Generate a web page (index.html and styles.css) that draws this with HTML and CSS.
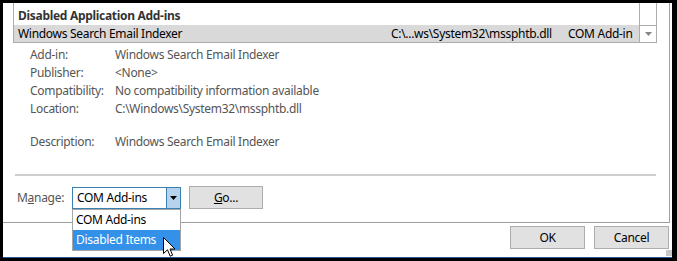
FILE: index.html
```html
<!DOCTYPE html>
<html lang="en">

<head>
    <meta charset="UTF-8">
    <title>COM Add-ins</title>
    <link rel="stylesheet" href="styles.css">
</head>

<body>
    <div class="window">
        <div class="panel">
            <!-- Add-in list -->
            <div class="listbox">
                <div class="list-body">
                    <div class="list-group">Disabled Application Add-ins</div>
                    <div class="list-row selected">
                        <span>Windows Search Email Indexer</span>
                        <span>C:\...ws\System32\mssphtb.dll</span>
                        <span>COM Add-in</span>
                    </div>
                </div>
                <div class="scrollbar">
                    <div class="scroll-track"></div>
                    <div class="scroll-down">
                        <svg width="7" height="4" viewBox="0 0 7 4">
                            <path d="M0 0 H7 L3.5 4 Z" fill="#868686" />
                        </svg>
                    </div>
                </div>
            </div>
            <!-- Details -->
            <div class="details">
                <span class="label">Add-in:</span>
                <span class="value">Windows Search Email Indexer</span>
                <span class="label">Publisher:</span>
                <span class="value">&lt;None&gt;</span>
                <span class="label">Compatibility:</span>
                <span class="value">No compatibility information available</span>
                <span class="label">Location:</span>
                <span class="value">C:\Windows\System32\mssphtb.dll</span>
                <span class="label spaced">Description:</span>
                <span class="value spaced">Windows Search Email Indexer</span>
            </div>
            <div class="separator"></div>
            <!-- Manage -->
            <div class="manage">
                <span class="manage-label">M<u>a</u>nage:</span>
                <div class="combo">
                    <span class="combo-value">COM Add-ins</span>
                    <span class="combo-btn">
                        <svg width="7" height="4" viewBox="0 0 7 4">
                            <path d="M0 0 H7 L3.5 4 Z" fill="#000" />
                        </svg>
                    </span>
                    <ul class="combo-list">
                        <li>COM Add-ins</li>
                        <li class="active">Disabled Items</li>
                    </ul>
                </div>
                <button class="btn go-button"><u>G</u>o...</button>
            </div>
        </div>
        <div class="actions">
            <button class="btn">OK</button>
            <button class="btn">Cancel</button>
        </div>
        <div class="grip"></div>
        <svg class="cursor" width="13" height="21" viewBox="0 0 13 21">
            <path d="M0.5 0.5 V16.5 L4.5 12.8 L7.2 19.2 L9.6 18.2 L7 12 H12 Z" fill="#fff" stroke="#000"
                stroke-width="1" stroke-linejoin="miter" />
        </svg>
    </div>
</body>

</html>
```

FILE: styles.css
```css
body {
    margin: 0;
    padding: 3px 5px 3px 3px;
    background-color: #000;
    font-family: 'Noto Sans', 'Open Sans', sans-serif;
    font-size: 12px;
    letter-spacing: -0.3px;
    color: #000;
}

.window {
    position: relative;
    width: 669px;
    height: 254px;
    background-color: #fff;
    border-bottom: 1px solid #2b5797;
}

.panel {
    width: 666px;
    height: 219px;
    border-right: 1px solid #a0a0a0;
    border-bottom: 1px solid #a0a0a0;
}

/* list */

.listbox {
    display: flex;
    margin-left: 10px;
    width: 642px;
    height: 39px;
    border-left: 1px solid #acacac;
    border-right: 1px solid #acacac;
    border-bottom: 1px solid #acacac;
}

.list-body {
    flex: 1;
}

.list-group {
    height: 22px;
    line-height: 26px;
    padding-left: 4px;
    font-weight: bold;
    color: #333;
}

.list-row {
    display: grid;
    grid-template-columns: 373px 177px 1fr;
    height: 17px;
    line-height: 17px;
    padding-left: 4px;
    white-space: nowrap;
}

.list-row.selected {
    background-color: #d9d9d9;
}

.scrollbar {
    display: flex;
    flex-direction: column;
    width: 16px;
    border-left: 1px solid #acacac;
}

.scroll-track {
    flex: 1;
}

.scroll-down {
    height: 16px;
    border-top: 1px solid #acacac;
    display: flex;
    align-items: center;
    justify-content: center;
}

/* details */

.details {
    display: grid;
    grid-template-columns: 85px 1fr;
    line-height: 18px;
    padding: 3px 0 0 27px;
    color: #555;
}

.details .spaced {
    margin-top: 15px;
}

.separator {
    height: 2px;
    margin: 23px 0 0 12px;
    width: 641px;
    background-color: #cfcfcf;
}

/* manage */

.manage {
    display: flex;
    align-items: center;
    margin-top: 10px;
    padding-left: 14px;
}

.manage-label {
    width: 55px;
    color: #555;
}

.combo {
    position: relative;
    display: flex;
    width: 107px;
    height: 20px;
    border: 1px solid #3c7fb1;
}

.combo-value {
    flex: 1;
    line-height: 20px;
    padding-left: 4px;
}

.combo-btn {
    width: 13px;
    background-color: #b7d2ec;
    border-left: 1px solid #3c7fb1;
    display: flex;
    align-items: center;
    justify-content: center;
}

.combo-list {
    position: absolute;
    left: -1px;
    top: 21px;
    width: 107px;
    margin: 0;
    padding: 0;
    list-style: none;
    background-color: #fff;
    border: 1px solid #a5a5a5;
}

.combo-list li {
    height: 20px;
    line-height: 20px;
    padding-left: 3px;
}

.combo-list li.active {
    background-color: #3391ea;
    color: #fff;
}

.btn {
    font-family: 'Noto Sans', 'Open Sans', sans-serif;
    font-size: 12px;
    letter-spacing: -0.3px;
    color: #000;
    background-color: #e1e1e1;
    border: 1px solid #adadad;
    padding: 0;
    height: 23px;
    width: 75px;
}

.go-button {
    margin-left: 8px;
    width: 74px;
}

/* bottom buttons */

.actions {
    display: flex;
    justify-content: flex-end;
    gap: 9px;
    margin-top: 3px;
    padding-right: 3px;
}

.grip {
    position: absolute;
    right: 0;
    bottom: 1px;
    width: 6px;
    height: 6px;
    background-image: radial-gradient(#c8c8c8 1px, transparent 1px);
    background-size: 2px 2px;
}

.cursor {
    position: absolute;
    left: 160px;
    top: 234px;
}
```
